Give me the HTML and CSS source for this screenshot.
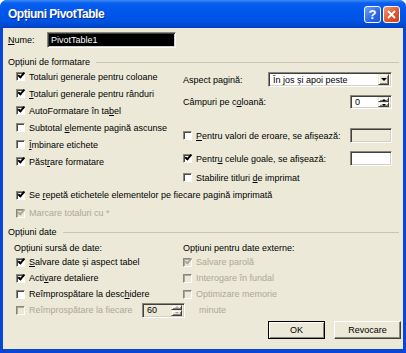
FILE: index.html
```html
<!DOCTYPE html>
<html lang="ro">
<head>
    <meta charset="UTF-8">
    <title>Opțiuni PivotTable</title>
    <link rel="stylesheet" href="styles.css">
</head>
<body>

<div class="window">
    <!-- Title bar -->
    <div class="titlebar">
        <span class="title">Opțiuni PivotTable</span>
        <div class="tb-buttons">
            <span class="tb-btn help">?</span>
            <span class="tb-btn close">
                <svg width="9" height="9" viewBox="0 0 9 9"><path d="M1 1L8 8M8 1L1 8" stroke="#fff" stroke-width="1.8" fill="none"/></svg>
            </span>
        </div>
    </div>

    <div class="client">
        <div class="name-row">
            <span class="name-label"><u>N</u>ume:</span>
            <span class="sunken name-field">PivotTable1</span>
        </div>

        <!-- Formatting options -->
        <div class="group-head">Opțiuni de formatare</div>
        <div class="format-cols">
            <div class="col-left">
                <div class="check on"><span class="box"></span><span>Totaluri generale pentru coloane</span></div>
                <div class="check on"><span class="box"></span><span><u>T</u>otaluri generale pentru rânduri</span></div>
                <div class="check on"><span class="box"></span><span>AutoFormatare în ta<u>b</u>el</span></div>
                <div class="check"><span class="box"></span><span>Subtotal <u>e</u>lemente pagină ascunse</span></div>
                <div class="check"><span class="box"></span><span><u>Î</u>mbinare etichete</span></div>
                <div class="check on"><span class="box"></span><span>Păst<u>r</u>are formatare</span></div>
            </div>
            <div class="col-right">
                <div class="field-row aspect">
                    <span>Aspect pagină:</span>
                    <span class="sunken select">
                        <span class="select-text">În jos și apoi peste</span>
                        <span class="raised drop-btn"><span class="tri-down"></span></span>
                    </span>
                </div>
                <div class="field-row campuri">
                    <span>Câmpuri pe c<u>o</u>loană:</span>
                    <span class="sunken spin">
                        <span class="spin-text">0</span>
                        <span class="spin-btns">
                            <span class="raised spin-btn"><span class="tri-up"></span></span>
                            <span class="raised spin-btn"><span class="tri-down small"></span></span>
                        </span>
                    </span>
                </div>
                <div class="field-row valori">
                    <span class="check"><span class="box"></span><span><u>P</u>entru valori de eroare, se afișează:</span></span>
                    <span class="sunken textbox disabled-box"></span>
                </div>
                <div class="field-row celule">
                    <span class="check on"><span class="box"></span><span>Pentr<u>u</u> celule goale, se afișează:</span></span>
                    <span class="sunken textbox"></span>
                </div>
                <div class="check stabilire"><span class="box"></span><span>Stabilire titluri <u>d</u>e imprimat</span></div>
            </div>
        </div>
        <div class="check on wide"><span class="box"></span><span>Se <u>r</u>epetă etichetele elementelor pe fiecare pagină imprimată</span></div>
        <div class="check on disabled wide"><span class="box"></span><span>Marcare totaluri cu *</span></div>

        <!-- Data options -->
        <div class="group-head data-head">Opțiuni date</div>
        <div class="data-cols">
            <div class="col-left">
                <div class="sub-head left-sub">Opțiuni sursă de date:</div>
                <div class="check on row16"><span class="box"></span><span><u>S</u>alvare date și aspect tabel</span></div>
                <div class="check on row16"><span class="box"></span><span>Acti<u>v</u>are detaliere</span></div>
                <div class="check row16"><span class="box"></span><span>Reîmprospătare la desc<u>h</u>idere</span></div>
                <div class="check disabled row16">
                    <span class="box"></span><span class="spin-label">Reîmprospătare la fiecare</span>
                    <span class="sunken spin minutes-spin disabled-box">
                        <span class="spin-text">60</span>
                        <span class="spin-btns">
                            <span class="raised spin-btn"><span class="tri-up"></span></span>
                            <span class="raised spin-btn"><span class="tri-down small"></span></span>
                        </span>
                    </span>
                    <span class="minute">minute</span>
                </div>
            </div>
            <div class="col-right">
                <div class="sub-head">Opțiuni pentru date externe:</div>
                <div class="check on disabled row16"><span class="box"></span><span>Salvare parolă</span></div>
                <div class="check disabled row16"><span class="box"></span><span>Interogare în fundal</span></div>
                <div class="check disabled row16"><span class="box"></span><span>Optimizare memorie</span></div>
            </div>
        </div>

        <div class="buttons">
            <span class="btn default">OK</span>
            <span class="btn revocare">Revocare</span>
        </div>
    </div>
</div>

</body>
</html>
```

FILE: styles.css
```css
* { box-sizing: border-box; }
body { margin: 0; font-family: "Liberation Sans", Arial, sans-serif; font-size: 9px; color: #000; }
u { text-decoration: underline; text-underline-offset: 1px; }

.window { width: 406px; height: 353px; display: flex; flex-direction: column; background: #0847d6; border-radius: 7px 7px 0 0; overflow: hidden; }

/* title bar */
.titlebar { height: 28px; flex-shrink: 0; display: flex; align-items: center; justify-content: space-between; padding: 0 6px 0 8px;
    background: linear-gradient(#3d8cf5 0, #0a5fef 3px, #0058ee 10px, #0054e3 20px, #0049d0 26px, #003cba 28px); }
.title { color: #fff; font-weight: bold; font-size: 12px; letter-spacing: -0.5px; text-shadow: 1px 1px 0 #0b2d9b; }
.tb-buttons { display: flex; gap: 2px; }
.tb-btn { width: 17px; height: 17px; border: 1px solid #fff; border-radius: 3px; display: flex; align-items: center; justify-content: center; color: #fff; font-weight: bold; font-size: 13px; }
.help { background: linear-gradient(135deg, #6fa2f9, #2b67e4 60%, #1f53d2); }
.close { background: linear-gradient(135deg, #f0977a, #e2582f 55%, #c9401a); }

/* client area */
.client { flex: 1; margin: 0 3px 4px; background: #ece9d8; padding: 4px 3px 0 5px; }

.name-row { display: flex; align-items: center; height: 16px; }
.name-label { width: 39px; }
.name-row .name-field { width: 129px; height: 16px; background: #000; color: #fff; padding-left: 3px; display: flex; align-items: center; }

.group-head { display: flex; align-items: center; height: 12px; margin-top: 8px; }
.group-head::after { content: ""; flex: 1; border-top: 1px solid #c9c6b6; margin-left: 6px; margin-right: 1px; }
.data-head { margin-top: 4px; }

.format-cols, .data-cols { display: flex; padding-left: 8px; }
.col-left { width: 167px; flex-shrink: 0; }
.col-right { width: 209px; }
.data-cols { margin-top: 4px; }

/* checkboxes */
.check { display: flex; align-items: center; height: 17px; white-space: nowrap; }
.box { width: 9px; height: 9px; flex-shrink: 0; margin-right: 4px; background: #fff; border: 1px solid; border-color: #8a877a #fff #fff #8a877a; box-shadow: inset 1px 1px 0 #4a4a4a; position: relative; }
.check.on .box::after { content: ""; position: absolute; left: 1px; top: 0px; width: 5px; height: 2px; border-left: 2px solid #000; border-bottom: 2px solid #000; transform: rotate(-48deg); transform-origin: 3px 2px; }
.check.disabled { color: #aca899; }
.check.disabled .box { background: #ece9d8; box-shadow: inset 1px 1px 0 #aca899; }
.check.disabled.on .box::after { border-color: #aca899; }
.wide { height: 18px; padding-left: 8px; }
.row16 { height: 16px; }

.sub-head { height: 12px; display: flex; align-items: center; }
.left-sub { margin-left: -2px; }

/* right column rows */
.field-row { display: flex; align-items: center; justify-content: space-between; }
.aspect { margin-top: 4px; height: 15px; }
.campuri { margin-top: 8px; height: 14px; }
.valori { margin-top: 19px; height: 15px; }
.celule { margin-top: 8px; height: 15px; }
.stabilire { margin-top: 3px; }
.field-row .check { height: auto; }

.sunken { border: 1px solid; border-color: #8a877a #fff #fff #8a877a; box-shadow: inset 1px 1px 0 #404040, inset -1px -1px 0 #d4d0c8; background: #fff; }
.raised { background: #ece9d8; border: 1px solid; border-color: #ece9d8 #404040 #404040 #ece9d8; box-shadow: inset 1px 1px 0 #fff, inset -1px -1px 0 #8a877a; display: flex; align-items: center; justify-content: center; }

.select { width: 124px; height: 15px; display: flex; align-items: center; justify-content: space-between; padding: 2px 2px 2px 4px; }
.drop-btn { width: 11px; height: 11px; }
.tri-down { width: 0; height: 0; border-left: 3px solid transparent; border-right: 3px solid transparent; border-top: 3px solid #000; }
.tri-up { width: 0; height: 0; border-left: 2px solid transparent; border-right: 2px solid transparent; border-bottom: 2px solid #000; }
.tri-down.small { border-left-width: 2px; border-right-width: 2px; border-top-width: 2px; }

.spin { width: 42px; height: 14px; display: flex; align-items: center; justify-content: space-between; padding: 1px 2px 1px 4px; }
.spin-btns { display: flex; flex-direction: column; height: 100%; }
.spin-btn { width: 11px; flex: 1; }
.minutes-spin { width: 43px; height: 15px; flex-shrink: 0; }
.disabled-box { background: #ece9d8; }
.minutes-spin .spin-text { color: #000; }
.minutes-spin .tri-up { border-bottom-color: #aca899; }
.minutes-spin .tri-down { border-top-color: #aca899; }
.spin-label { width: 113px; flex-shrink: 0; }
.minute { margin-left: 14px; }

.textbox { width: 42px; height: 15px; }

/* buttons */
.buttons { display: flex; justify-content: flex-end; gap: 9px; margin-top: 3px; margin-right: -1px; }
.btn { height: 18px; display: flex; align-items: center; justify-content: center; background: #ece9d8; border: 1px solid; border-color: #fff #404040 #404040 #fff; box-shadow: inset -1px -1px 0 #8a877a; }
.btn.default { width: 57px; border-color: #000; box-shadow: inset 1px 1px 0 #fff, inset -1px -1px 0 #8a877a; }
.btn.revocare { width: 67px; }
```
